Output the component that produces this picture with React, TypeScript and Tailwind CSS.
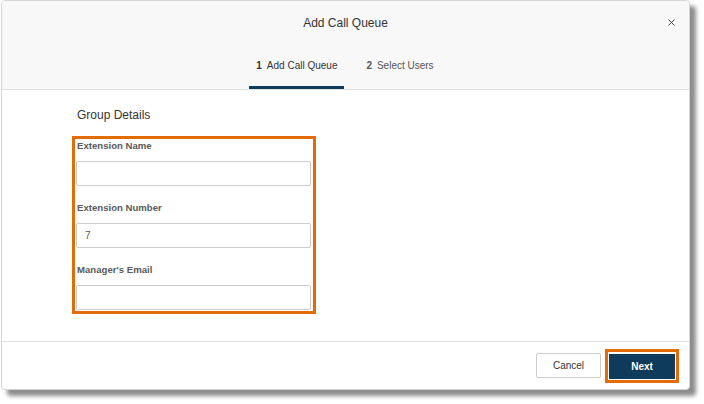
import { useState } from "react";

const Field = ({ label, value, onChange }: { label: string; value: string; onChange: (v: string) => void }) => (
  <div className="flex flex-col">
    <label className="h-[12px] leading-[12px] text-[9.6px] font-bold text-[#5a5a5a] mb-[9px] pl-[1px]">{label}</label>
    <input
      className="w-[235px] h-[25px] border border-[#cccccc] rounded-[2px] px-[8px] text-[10px] text-[#555] outline-none bg-white"
      value={value}
      onChange={(e) => onChange(e.target.value)}
    />
  </div>
);

const App = () => {
  const [name, setName] = useState("");
  const [number, setNumber] = useState("7");
  const [email, setEmail] = useState("");

  return (
    <div className="w-[704px] h-[404px] bg-white font-['Liberation_Sans',Arial,sans-serif] overflow-hidden">
      <div className="relative ml-[1px] w-[689px] h-[390px] flex flex-col bg-white border border-[#d6d6d6] rounded-[4px] shadow-[6px_6px_4px_rgba(0,0,0,0.45)] overflow-hidden">
        <div className="bg-[#f8f8f8] border-b border-[#e2e2e2] h-[89px] flex flex-col">
          <div className="h-[43px] flex items-center justify-center text-[12px] text-[#333]">Add Call Queue</div>
          <button className="absolute right-[14px] top-[17px] w-[8px] h-[8px] flex items-center justify-center">
            <svg width="7" height="7" viewBox="0 0 7 7" stroke="#444" strokeWidth="1">
              <path d="M0.5 0.5L6.5 6.5M6.5 0.5L0.5 6.5" />
            </svg>
          </button>
          <div className="flex justify-center h-[45px]">
            <div className="w-[95px] h-[45px] flex items-center justify-center border-b-[3px] border-[#0e3a5b] text-[10px] text-[#333]">
              <span className="font-bold mr-[5px]">1</span>Add Call Queue
            </div>
            <div className="ml-[14px] px-[8px] h-[45px] flex items-center border-b-[3px] border-transparent text-[10px] text-[#555]">
              <span className="font-bold mr-[5px]">2</span>Select Users
            </div>
          </div>
        </div>

        <div className="flex-1 pl-[70px] pt-[18px]">
          <div className="ml-[5px] text-[12px] leading-[14px] text-[#333]">Group Details</div>
          <div className="mt-[14px] w-[244px] border-[3px] border-[#e36c0a] px-[1px] pt-[1px] pb-[1px] flex flex-col gap-[16px]">
            <Field label="Extension Name" value={name} onChange={setName} />
            <Field label="Extension Number" value={number} onChange={setNumber} />
            <Field label="Manager's Email" value={email} onChange={setEmail} />
          </div>
        </div>

        <div className="h-[48px] border-t border-[#e2e2e2] flex items-center justify-end pr-[10px] gap-[4px]">
          <button className="w-[65px] h-[25px] border border-[#cccccc] rounded-[2px] bg-white text-[10px] text-[#333]">Cancel</button>
          <div className="border-[3px] border-[#e36c0a] p-[1px] bg-white">
            <button className="w-[66px] h-[25px] bg-[#0e3a5b] text-white text-[10px] font-bold">Next</button>
          </div>
        </div>
      </div>
    </div>
  );
};

export default App;
